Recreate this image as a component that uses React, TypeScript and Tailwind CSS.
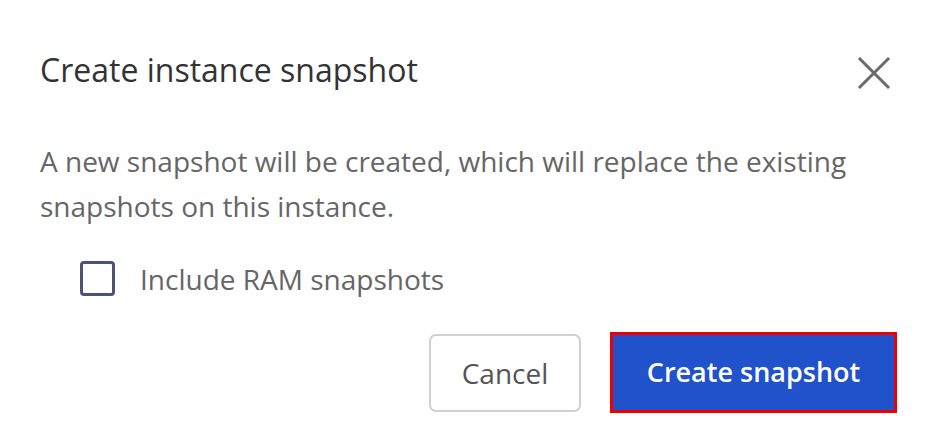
import React, { useState } from "react";

const FONT = { fontFamily: '"Open Sans", "Noto Sans", sans-serif' };

const App = () => {
  const [withRam, setWithRam] = useState<boolean>(false);

  return (
    <div className="w-[940px] h-[445px] bg-white overflow-hidden" style={FONT}>
      <div className="flex flex-col pl-[40px] pr-[43px] pt-[48px]">
        {/* Header */}
        <div className="flex items-start justify-between">
          <h2 className="text-[32px] leading-[44px] text-[#333333] font-normal">
            Create instance snapshot
          </h2>
          <button className="mt-[8px] mr-[6px] text-[#6b6b6b]" aria-label="Close">
            <svg width="34" height="34" viewBox="0 0 34 34" fill="none">
              <path
                d="M3 3L31 31M31 3L3 31"
                stroke="currentColor"
                strokeWidth="3"
                strokeLinecap="square"
              />
            </svg>
          </button>
        </div>

        {/* Body */}
        <p className="mt-[47px] text-[28px] leading-[45px] text-[#666666]">
          A new snapshot will be created, which will replace the existing snapshots on this instance.
        </p>

        <label className="mt-[32px] ml-[40px] flex items-center gap-[25px] cursor-pointer">
          <span
            onClick={() => setWithRam(!withRam)}
            className="w-[35px] h-[35px] rounded-[4px] border-[3px] border-[#4d5377] bg-white flex items-center justify-center"
          >
            {withRam && (
              <svg width="22" height="22" viewBox="0 0 22 22" fill="none">
                <path d="M3 11l5 5 11-11" stroke="#4d5377" strokeWidth="3" />
              </svg>
            )}
          </span>
          <span className="text-[28px] leading-[34px] text-[#666666]">Include RAM snapshots</span>
        </label>

        {/* Footer */}
        <div className="mt-[36px] flex items-center justify-end gap-[29px]">
          <button className="w-[152px] h-[78px] rounded-[7px] border-2 border-[#d0d0d0] bg-white text-[28px] text-[#555555]">
            Cancel
          </button>
          <button className="w-[287px] h-[81px] border-[3px] border-[#ee0000] bg-[#2052cc] text-[27px] font-semibold text-white">
            Create snapshot
          </button>
        </div>
      </div>
    </div>
  );
};

export default App;
